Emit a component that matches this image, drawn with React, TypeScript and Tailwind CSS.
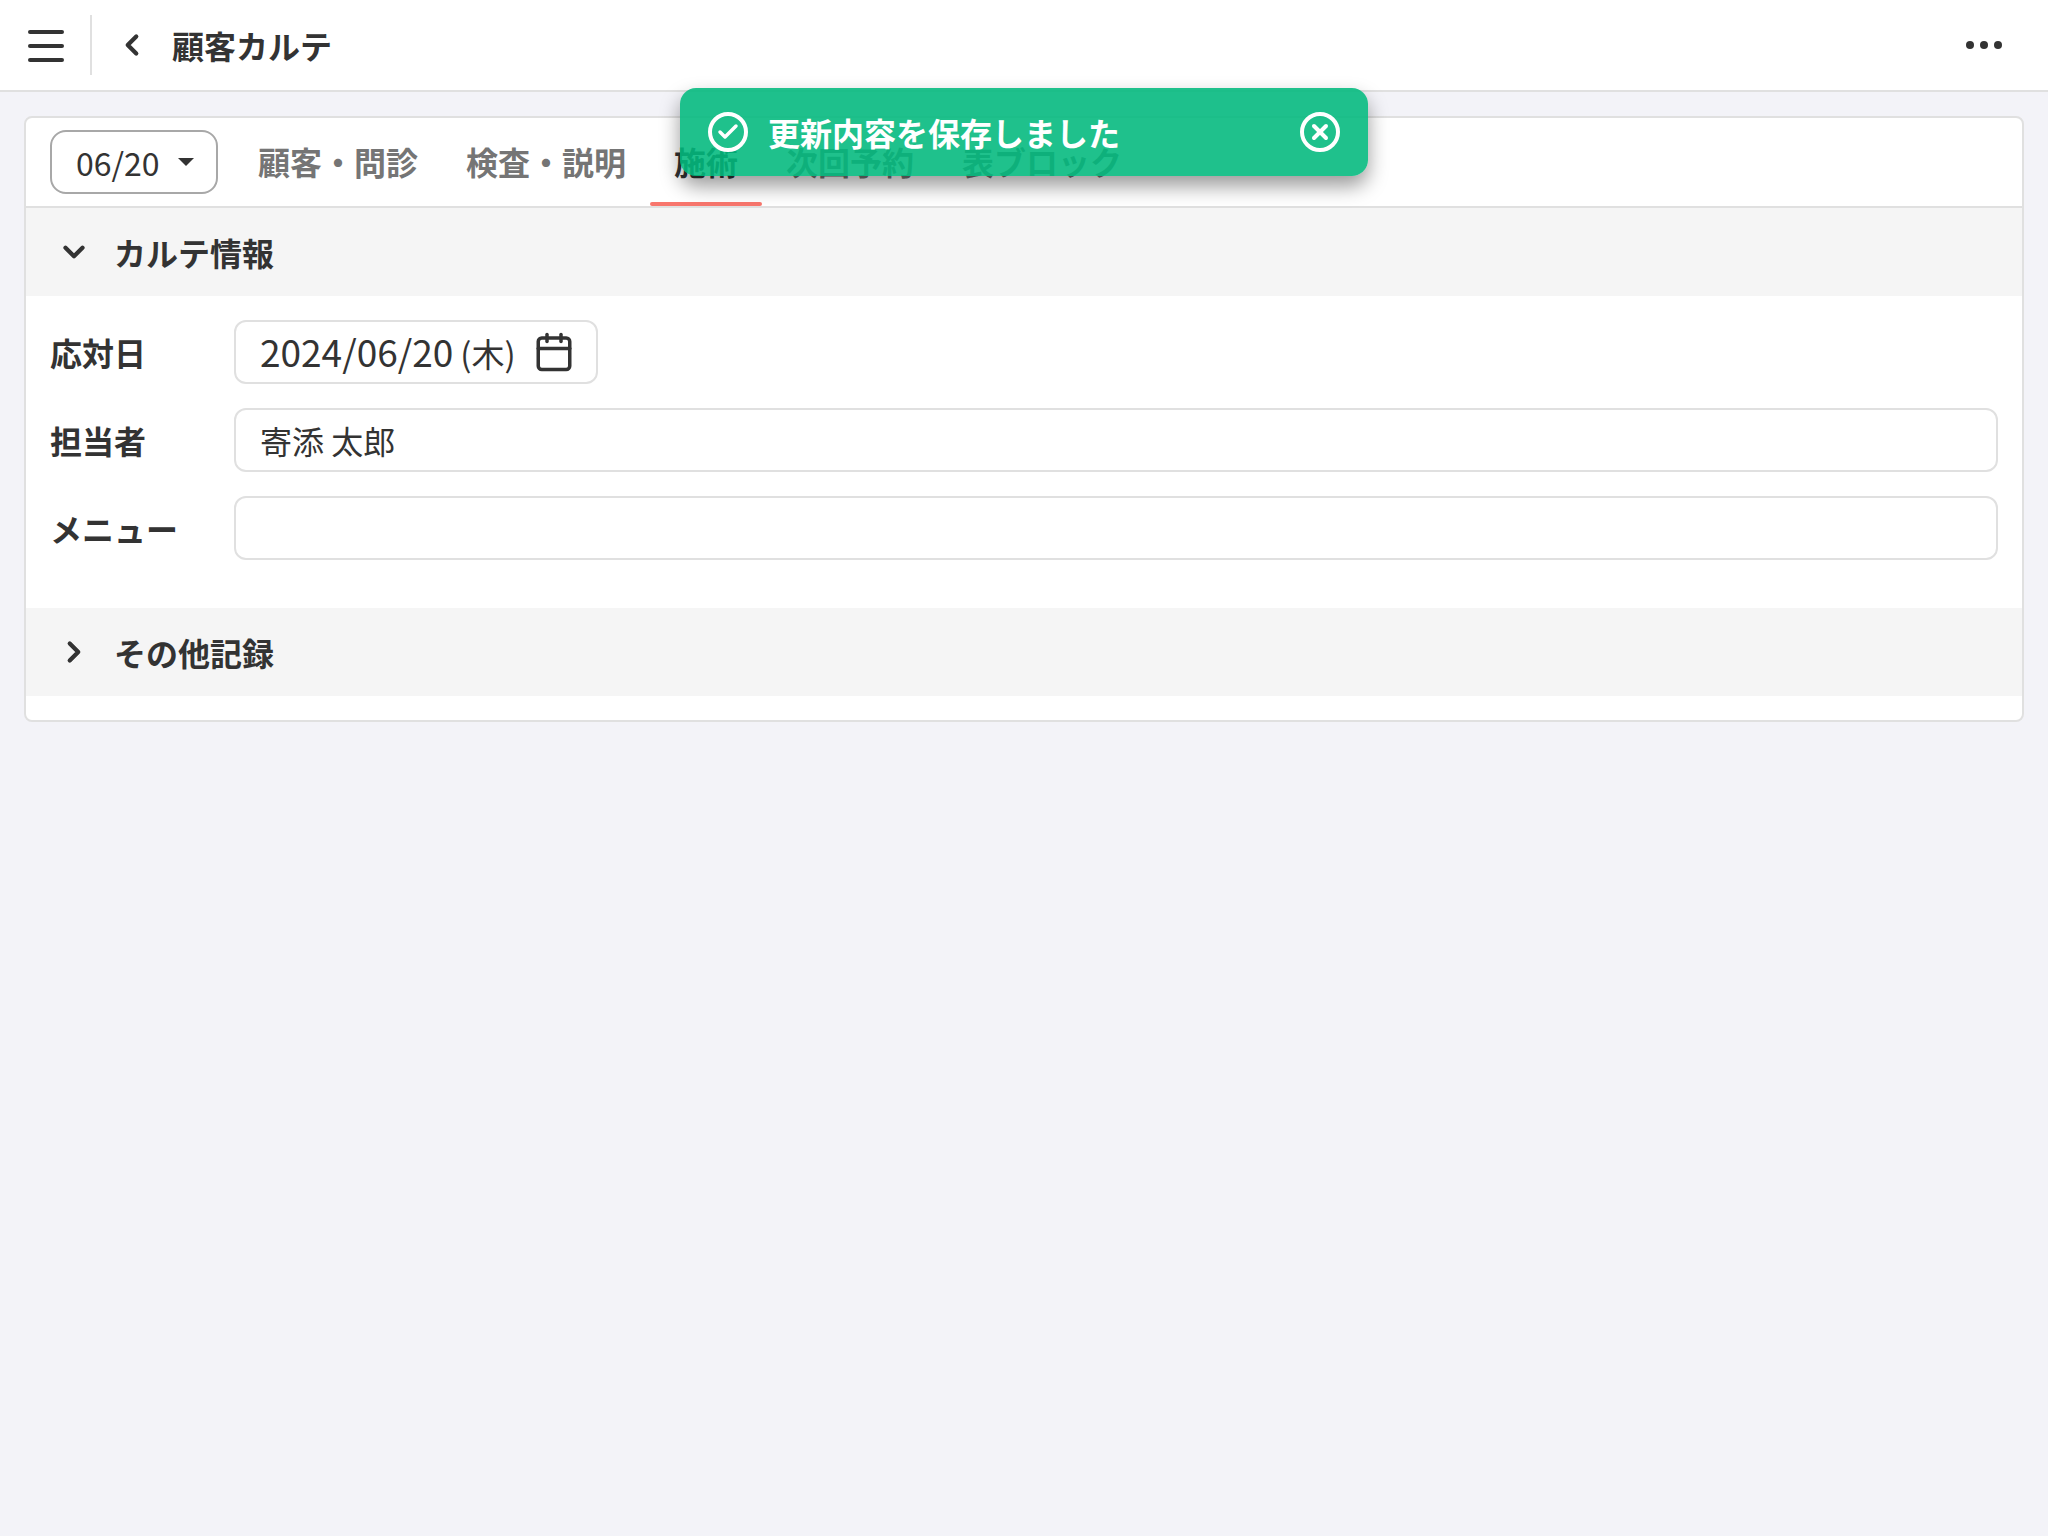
import { Calendar, Check, ChevronDown, ChevronLeft, ChevronRight, X } from "lucide-react";

const TABS = ["顧客・問診", "検査・説明", "施術", "次回予約", "表ブロック"];

function Tab({ label, active }: { label: string; active: boolean }) {
  return (
    <div className={active ? "relative h-[88px] px-6 pt-[19px] font-bold text-[#333333]" : "relative h-[88px] px-6 pt-[19px] font-bold text-[#757575]"}>
      {label}
      {active && <div className="absolute bottom-0 left-0 right-0 h-1 rounded-sm bg-[#f8766d]" />}
    </div>
  );
}

function SectionHeader({ label, open }: { label: string; open: boolean }) {
  return (
    <div className="flex h-[88px] items-center bg-[#f5f5f5] pl-[28px] font-bold">
      <div className="flex w-[40px] justify-center">
        {open ? <ChevronDown size={34} strokeWidth={3} /> : <ChevronRight size={34} strokeWidth={3} />}
      </div>
      <span className="ml-[20px]">{label}</span>
    </div>
  );
}

function Row({ label, children }: { label: string; children?: React.ReactNode }) {
  return (
    <div className="flex items-center">
      <div className="w-[184px] shrink-0 font-bold">{label}</div>
      {children}
    </div>
  );
}

export default function App() {
  return (
    <div className="relative min-h-[1536px] bg-[#f3f3f8] font-['Noto_Sans_CJK_JP',sans-serif] text-[32px] leading-[48px] text-[#333333]">
      <header className="flex h-[92px] items-center border-b-2 border-[#e0e0e0] bg-white">
        <div className="flex h-[60px] w-[92px] items-center justify-center border-r-2 border-[#e0e0e0]">
          <div className="ml-[2px] mt-[2px] flex w-9 flex-col gap-[10px]">
            <div className="h-1 rounded-full bg-[#333333]" />
            <div className="h-1 rounded-full bg-[#333333]" />
            <div className="h-1 rounded-full bg-[#333333]" />
          </div>
        </div>
        <ChevronLeft size={34} strokeWidth={3} className="ml-[23px]" />
        <h1 className="ml-[23px] font-bold">顧客カルテ</h1>
        <div className="ml-auto mr-[46px] flex gap-[6px]">
          <div className="h-2 w-2 rounded-full bg-[#333333]" />
          <div className="h-2 w-2 rounded-full bg-[#333333]" />
          <div className="h-2 w-2 rounded-full bg-[#333333]" />
        </div>
      </header>

      <div className="p-6">
        <div className="overflow-hidden rounded-lg border-2 border-[#e0e0e0] bg-white pb-6">
          <div className="flex h-[90px] items-start border-b-2 border-[#e0e0e0] pl-6">
            <div className="mr-4 mt-3 flex h-[64px] w-[168px] items-center justify-between rounded-2xl border-2 border-[#a8a8a8] pl-6 pr-[22px]">
              <span>06/20</span>
              <div className="h-0 w-0 border-x-[8px] border-t-[8px] border-x-transparent border-t-[#333333]" />
            </div>
            {TABS.map(t => <Tab key={t} label={t} active={t === "施術"} />)}
          </div>

          <SectionHeader label="カルテ情報" open />
          <div className="flex flex-col gap-6 px-6 pb-12 pt-6">
            <Row label="応対日">
              <div className="flex h-[64px] w-[364px] items-center rounded-xl border-2 border-[#e0e0e0] pl-[24px]">
                <span className="whitespace-nowrap">
                  <span className="text-[37px]">2024/06/20</span>
                  <span className="ml-[7px] text-[33px]">(木)</span>
                </span>
                <Calendar size={42} strokeWidth={2} className="ml-[17px] shrink-0" />
              </div>
            </Row>
            <Row label="担当者">
              <div className="flex h-[64px] flex-1 items-center rounded-xl border-2 border-[#e0e0e0] pl-[24px]">寄添 太郎</div>
            </Row>
            <Row label="メニュー">
              <div className="h-[64px] flex-1 rounded-xl border-2 border-[#e0e0e0]" />
            </Row>
          </div>
          <SectionHeader label="その他記録" open={false} />
        </div>
      </div>

      <div className="absolute left-[680px] top-[88px] flex h-[88px] w-[688px] items-center rounded-2xl bg-[#00b87c]/[.88] pl-7 pr-7 font-bold text-white shadow-[0_10px_20px_rgba(0,0,0,0.4)]">
        <div className="flex h-[40px] w-[40px] items-center justify-center rounded-full border-4 border-white">
          <Check size={24} strokeWidth={3.5} />
        </div>
        <span className="mb-[1px] ml-5">更新内容を保存しました</span>
        <div className="ml-auto flex h-[40px] w-[40px] items-center justify-center rounded-full border-4 border-white">
          <X size={24} strokeWidth={4} />
        </div>
      </div>
    </div>
  );
}
